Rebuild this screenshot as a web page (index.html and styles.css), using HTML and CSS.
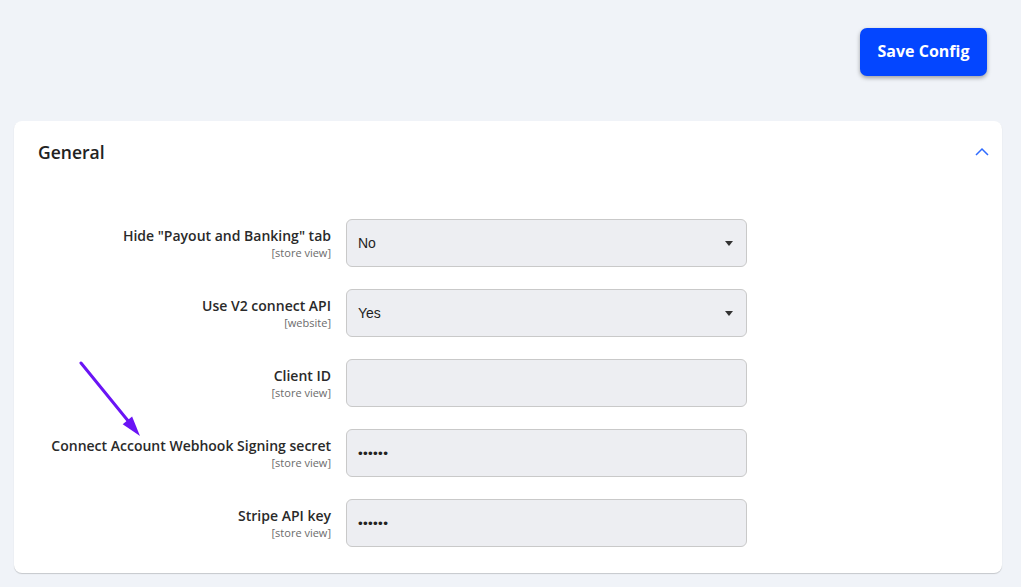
FILE: index.html
```html
<!DOCTYPE html>
<html>
<head>
<meta charset="utf-8">
<link rel="stylesheet" href="styles.css">
</head>
<body>
<div class="page">
  <div class="toolbar">
    <button class="save">Save Config</button>
  </div>
  <section class="card">
    <div class="card-head">
      <h2>General</h2>
      <svg class="chev" width="14" height="9" viewBox="0 0 14 9"><path d="M1 8 L7 2 L13 8" fill="none" stroke="#2f6bff" stroke-width="1.5"/></svg>
    </div>
    <div class="rows">
      <div class="row">
        <div class="label"><span class="name">Hide "Payout and Banking" tab</span><span class="scope">[store view]</span></div>
        <div class="field select"><span>No</span><span class="caret"></span></div>
      </div>
      <div class="row">
        <div class="label"><span class="name">Use V2 connect API</span><span class="scope">[website]</span></div>
        <div class="field select"><span>Yes</span><span class="caret"></span></div>
      </div>
      <div class="row">
        <div class="label"><span class="name">Client ID</span><span class="scope">[store view]</span></div>
        <div class="field"></div>
      </div>
      <div class="row">
        <div class="label"><span class="name">Connect Account Webhook Signing secret</span><span class="scope">[store view]</span></div>
        <div class="field"><span class="dots">••••••</span></div>
      </div>
      <div class="row">
        <div class="label"><span class="name">Stripe API key</span><span class="scope">[store view]</span></div>
        <div class="field"><span class="dots">••••••</span></div>
      </div>
    </div>
  </section>
  <svg class="arrow" width="80" height="90" viewBox="0 0 80 90">
    <line x1="2" y1="2" x2="50" y2="61" stroke="#6a14f5" stroke-width="3" stroke-linecap="round"/>
    <polygon points="61,75 43.7,63.2 53.1,55.6" fill="#6a14f5"/>
  </svg>
</div>
</body>
</html>
```
FILE: styles.css
```css
html, body {
  margin: 0;
  padding: 0;
  background: #f0f3f8;
  font-family: "Open Sans", "Liberation Sans", sans-serif;
  color: #303030;
}
.page {
  position: relative;
  width: 1021px;
  height: 587px;
  overflow: hidden;
}
.toolbar {
  display: flex;
  justify-content: flex-end;
  align-items: flex-start;
  padding: 28px 34px 0 0;
  height: 121px;
  box-sizing: border-box;
}
.save {
  width: 127px;
  height: 48px;
  border: none;
  border-radius: 7px;
  background: #0446ff;
  color: #fff;
  font-family: "Open Sans", sans-serif;
  font-weight: 700;
  font-size: 16px;
  box-shadow: 0 2px 4px rgba(0,0,0,0.35);
  padding: 0 0 2px;
}
.card {
  margin: 0 19px 0 14px;
  background: #fff;
  border-radius: 8px;
  box-shadow: 0 1px 1px rgba(0,0,0,0.18);
  height: 452px;
  box-sizing: border-box;
}
.card-head {
  display: flex;
  align-items: center;
  justify-content: space-between;
  padding: 10px 13px 0 24px;
  height: 51px;
  box-sizing: border-box;
}
.card-head h2 {
  margin: 0;
  font-size: 17.5px;
  font-weight: 600;
  color: #222;
}
.chev { margin-top: 0; }
.rows {
  display: flex;
  flex-direction: column;
  gap: 22px;
  padding-top: 47px;
}
.row {
  display: flex;
  align-items: center;
  gap: 15px;
}
.label {
  width: 317px;
  display: flex;
  flex-direction: column;
  align-items: flex-end;
  text-align: right;
}
.name {
  font-size: 14px;
  font-weight: 600;
  line-height: 19px;
  color: #2a2a2a;
  margin-top: -1px;
}
.scope {
  font-size: 11px;
  line-height: 15px;
  color: #6b6b6b;
}
.field {
  width: 401px;
  height: 48px;
  box-sizing: border-box;
  background: #edeef2;
  border: 1px solid #c9c9c9;
  border-radius: 6px;
  display: flex;
  align-items: center;
  justify-content: space-between;
  padding: 0 11px 0 11px;
  font-family: "Liberation Sans", Arial, sans-serif;
  font-size: 14px;
  color: #1e1e1e;
}
.caret {
  width: 0;
  height: 0;
  border-left: 4px solid transparent;
  border-right: 4px solid transparent;
  border-top: 5px solid #333;
  margin-right: 2px;
}
.dots {
  font-size: 13.5px;
  letter-spacing: 0.3px;
  color: #222;
}
.arrow {
  position: absolute;
  left: 79px;
  top: 361px;
}
```
